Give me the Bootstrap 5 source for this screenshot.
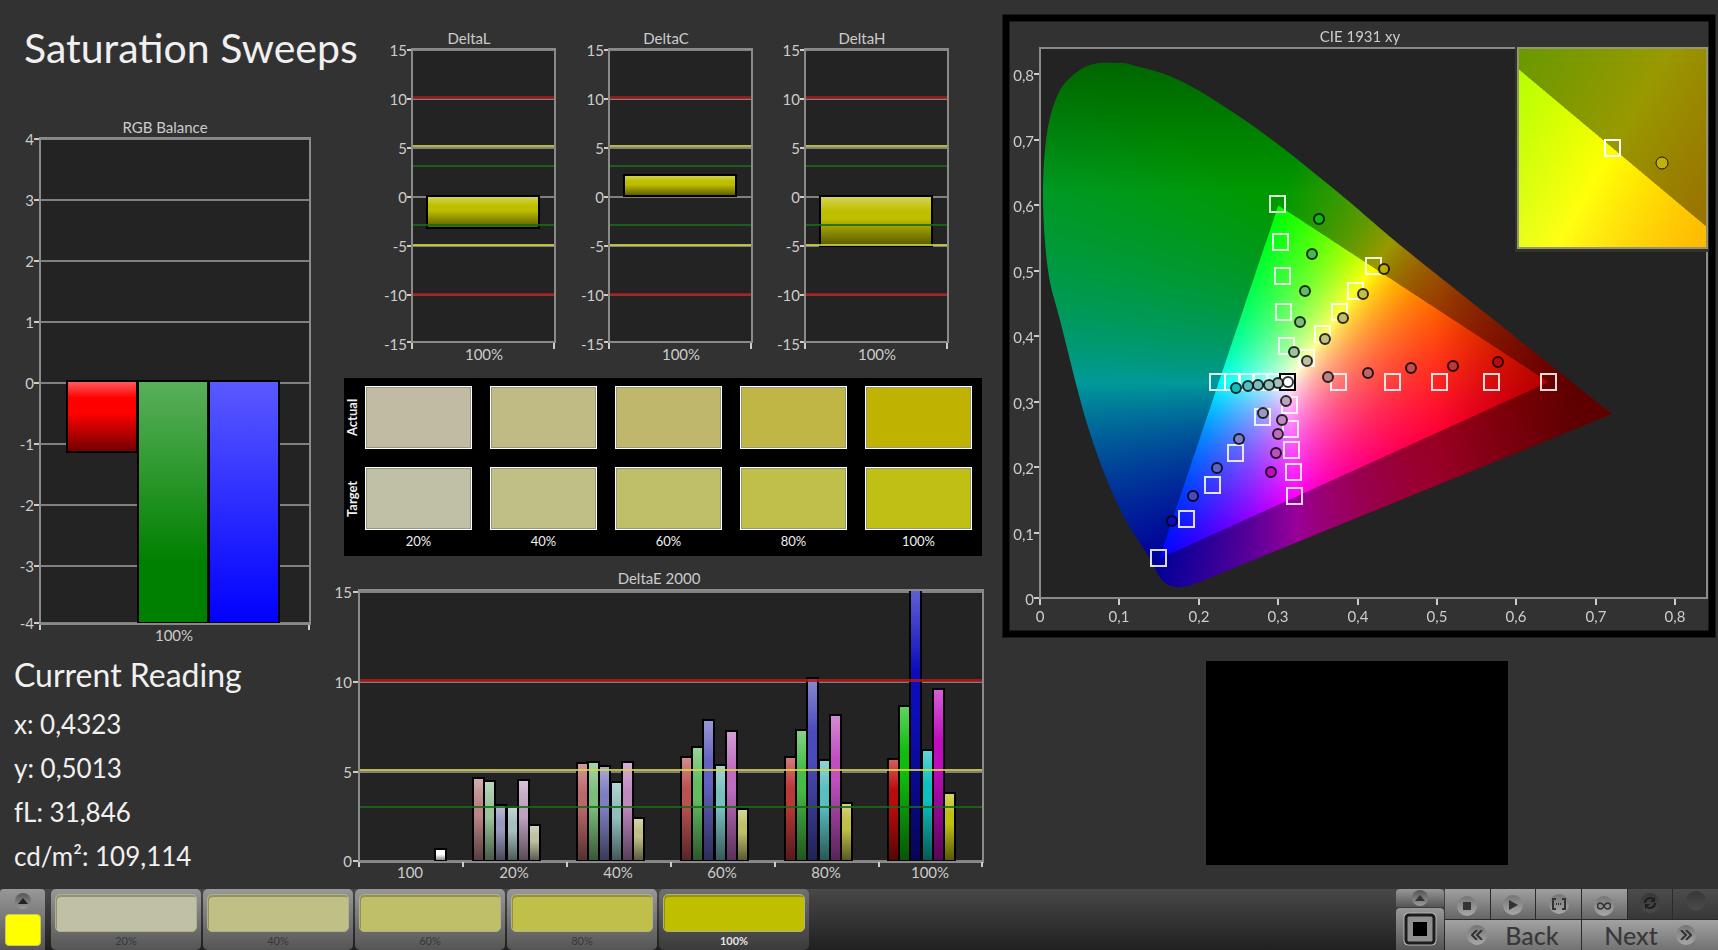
<!DOCTYPE html>
<html lang="en">
<head>
<meta charset="utf-8">
<meta name="viewport" content="width=device-width, initial-scale=1">
<title>Saturation Sweeps</title>
<link rel="stylesheet" href="https://cdn.jsdelivr.net/npm/bootstrap@5.3.0/dist/css/bootstrap.min.css">
<style>
  body { background: #323232; color: #f0f0f0; font-family: Lato, "Open Sans", sans-serif; }
  .dash { display: grid; grid-template-columns: minmax(0, 330fr) minmax(0, 670fr) minmax(0, 718fr); align-items: start; }
  .dash svg { display: block; width: 100%; height: auto; }
  .page-title { font-size: 41px; line-height: 48px; padding: 24px 0 38px 24px; white-space: nowrap; }
  .reading { padding-left: 14px; }
  .reading h2 { font-size: 32px; line-height: 42px; margin-bottom: 6px; }
  .reading p { font-size: 26px; line-height: 44px; margin: 0; }
  .axis { font-size: 15px; fill: #ccc; }
  .grid-line { stroke: #808080; stroke-width: 2; shape-rendering: crispEdges; }
  .tick { stroke: #ccc; stroke-width: 2; shape-rendering: crispEdges; }
  .frame { fill: none; stroke: #8a8a8a; stroke-width: 2; shape-rendering: crispEdges; }
  .limit { stroke-width: 3; shape-rendering: crispEdges; opacity: .85; }
  .limit.thin { stroke-width: 2; }

  .swatches { background: #000; margin: 8px 18px 9px 14px; padding: 8px 10px 0 0; display: grid;
    grid-template-columns: 21px 125fr 125fr 125fr 125fr 107fr; }
  .swatches .side { writing-mode: vertical-rl; transform: rotate(180deg); font-size: 13px; font-weight: 700; line-height: 16px;
    text-align: center; width: 16px; }
  .swatches .chip { height: 63px; border: 1px solid #fff; box-shadow: inset 0 0 0 1px #99977c; }
  .swatches .row-gap { grid-column: 1 / -1; height: 18px; }
  .swatches .cap { font-size: 13px; line-height: 18px; padding: 2px 0 6px; text-align: center; }
  .swatches .cell { padding-right: 18px; }
  .swatches .cell.last { padding-right: 0; }

  .preview { background: #000; width: 42%; aspect-ratio: 301 / 204; margin: 11px auto 0 206px; }

  .dock { height: 61px; background: linear-gradient(#484848, #202020); }
  .dock button { border: 0; padding: 0; color: #383838; }
  .metal { background: linear-gradient(#989898, #555); }
  .picker { width: 45px; border-radius: 4px 4px 0 0; }
  .picker .tone { width: 36px; height: 32px; background: #ff0; border: 1px solid #c8c85a; border-radius: 4px; }
  .picks { gap: 2px; margin-left: 2px; }
  .pick { flex: 0 1 150px; border-radius: 5px; font-size: 11px; line-height: 18px; }
  .pick .tone { height: 38px; margin: 5px 4px 0 4px; border: 1px solid #b0b08a; border-radius: 5px; box-shadow: inset 1px 2px 0 rgba(90, 90, 40, .45); }
  .dock .pick.on { background: linear-gradient(#707070, #3a3a3a); color: #e4e4e4; font-weight: 700; }
  .transport { width: 322px; }
  .stopcol { width: 48px; gap: 1px; margin-right: 1px; }
  .stopcol button { border-radius: 4px 4px 0 0; }
  .stopcol .expand { height: 18px; }
  .keys { display: grid; grid-template-columns: repeat(6, 1fr); grid-template-rows: 30px 30px; gap: 1px; background: #2a2a2a; }
  .keys button { background: linear-gradient(#a0a0a0, #666); }
  .keys .dim { background: linear-gradient(#4c4c4c, #383838); }
  .keys .wide { grid-column: span 3; font-size: 25px; line-height: 30px; font-weight: 500; background: linear-gradient(#a2a2a2, #727272); }
  .wide .legend-row { gap: 18px; }
  .knob { width: 20px; height: 20px; border-radius: 50%; background: linear-gradient(#757575, #a8a8a8); display: inline-flex; align-items: center; justify-content: center; }
  .dim .knob { background: linear-gradient(#383838, #4a4a4a); }
  .knob.mini { width: 16px; height: 16px; background: linear-gradient(#555, #999); }
</style>
</head>
<body class="d-flex flex-column min-vh-100">

<main class="dash flex-grow-1">
  <section>
    <h1 class="page-title fw-normal m-0">Saturation Sweeps</h1>
    <svg id="rgb" viewBox="0 110 330 540" role="img" aria-label="RGB Balance"></svg>
    <div class="reading">
      <h2 class="fw-normal pt-1">Current Reading</h2>
      <p>x: 0,4323</p>
      <p>y: 0,5013</p>
      <p>fL: 31,846</p>
      <p>cd/m²: 109,114</p>
    </div>
  </section>

  <section>
    <svg id="delta" viewBox="330 0 670 370" role="img" aria-label="DeltaL, DeltaC and DeltaH"></svg>
    <div class="swatches" id="swatches"></div>
    <svg id="de" viewBox="330 565 670 320" role="img" aria-label="DeltaE 2000"></svg>
  </section>

  <section>
    <svg id="cie" viewBox="1000 0 718 650" role="img" aria-label="CIE 1931 xy">
      <rect x="1006" y="18" width="706" height="616" fill="none" stroke="#000" stroke-width="7"/>
      <rect x="1040" y="48" width="667" height="550" fill="#232323"/>
      <foreignObject x="1040" y="48" width="667" height="550"><canvas id="gamut" class="d-block" width="667" height="550"></canvas></foreignObject>
      <g id="cieAxes"></g>
      <g id="points"></g>
      <rect x="1515" y="46" width="194" height="206" fill="#323232"/>
      <foreignObject x="1518" y="48" width="189" height="200"><canvas id="detail" class="d-block" width="189" height="200"></canvas></foreignObject>
      <rect class="frame" x="1518" y="48" width="189" height="200" style="stroke:#96966e"/>
      <rect x="1605" y="140" width="15" height="16" fill="none" stroke="#fff" stroke-width="2"/>
      <circle cx="1662" cy="163" r="6" fill="#bfb200" stroke="#111" stroke-width="1"/>
    </svg>
    <div class="preview"></div>
  </section>
</main>

<footer class="dock d-flex align-items-stretch justify-content-between">
  <div class="d-flex flex-grow-1">
    <button class="picker metal d-flex flex-column align-items-center justify-content-between pt-1 pb-1 me-1" aria-label="Current colour">
      <span class="knob mini"><svg width="10" height="6"><path d="M5 0 10 6H0z" fill="#222"/></svg></span>
      <span class="tone"></span>
    </button>
    <div class="picks d-flex flex-grow-1" id="picks"></div>
  </div>
  <div class="transport d-flex">
    <div class="stopcol d-flex flex-column">
      <button class="expand metal d-flex align-items-center justify-content-center" aria-label="Expand"><span class="knob mini"><svg width="10" height="6"><path d="M5 0 10 6H0z" fill="#333"/></svg></span></button>
      <button class="metal flex-grow-1 d-flex align-items-center justify-content-center" aria-label="Stop">
        <svg width="34" height="34" viewBox="0 0 34 34"><rect x="1" y="1" width="32" height="32" rx="4" fill="#999" stroke="#b5b5b5"/><rect x="3" y="3" width="28" height="28" rx="3" fill="#909090" stroke="#1c1c1c" stroke-width="3"/><path d="M10 10h14v14H10z" fill="#000"/></svg>
      </button>
    </div>
    <div class="keys flex-grow-1">
      <button aria-label="Stop reading"><span class="knob"><svg width="8" height="8"><path d="M0 0h8v8H0z" fill="#333"/></svg></span></button>
      <button aria-label="Play"><span class="knob"><svg width="10" height="10"><path d="M1 0 10 5 1 10z" fill="#333"/></svg></span></button>
      <button aria-label="Range"><span class="knob"><svg width="14" height="12" fill="none" stroke="#333" stroke-width="2"><path d="M4 1H1v10h3M10 1h3v10h-3"/><path d="M4 6h6" stroke-dasharray="1 1"/></svg></span></button>
      <button aria-label="Loop"><span class="knob"><svg width="14" height="8" fill="none" stroke="#333" stroke-width="1.500"><path d="M7 4C5 1 4 1 3.500 1a3 3 0 0 0 0 6C5 7 6 6 7 4s2-3 3.500-3a3 3 0 0 1 0 6C9 7 8 6 7 4z"/></svg></span></button>
      <button class="dim" aria-label="Refresh"><span class="knob"><svg width="14" height="14" fill="none" stroke="#1e1e1e" stroke-width="2"><path d="M2 7a5 5 0 0 1 8-4M12 7a5 5 0 0 1-8 4"/><path d="M12 1v5H7zM2 13V8h5z" fill="#1e1e1e" stroke="none"/></svg></span></button>
      <button class="dim" aria-label="Record"><span class="knob"></span></button>
      <button class="wide"><span class="legend-row d-flex align-items-center justify-content-center"><span class="knob"><svg width="12" height="10" fill="none" stroke="#333" stroke-width="2"><path d="M6 0 1 5l5 5M11 0 6 5l5 5"/></svg></span>Back</span></button>
      <button class="wide"><span class="legend-row d-flex align-items-center justify-content-center">Next<span class="knob"><svg width="12" height="10" fill="none" stroke="#333" stroke-width="2"><path d="m1 0 5 5-5 5M6 0l5 5-5 5"/></svg></span></span></button>
    </div>
  </div>
</footer>

<script src="https://cdn.jsdelivr.net/npm/bootstrap@5.3.0/dist/js/bootstrap.bundle.min.js"></script>
<script>
const $ = id => document.getElementById(id);
const line = (cls, x1, y1, x2, y2, extra = '') => `<line class="${cls}" x1="${x1}" y1="${y1}" x2="${x2}" y2="${y2}" ${extra}/>`;
const label = (x, y, t, a = 'middle') => `<text class="axis" x="${x}" y="${y}" text-anchor="${a}">${t}</text>`;
const rect = (x, y, w, h, fill, extra = '') => `<rect x="${x}" y="${y}" width="${w}" height="${h}" fill="${fill}" ${extra}/>`;
const shade = `<defs><linearGradient id="shade" x2="0" y2="1"><stop offset="0" stop-color="#fff" stop-opacity=".35"/><stop offset=".3" stop-color="#fff" stop-opacity="0"/><stop offset=".45" stop-opacity="0"/><stop offset="1" stop-opacity=".55"/></linearGradient></defs>`;
const bar = (x, y, w, h, c) => rect(x, y, w, h, c) + rect(x, y, w, h, 'url(#shade)', 'stroke="#000" stroke-width="2"');

// RGB balance
(() => {
  let s = `<defs>
    <linearGradient id="gr" x2="0" y2="1"><stop offset="0" stop-color="#ff6060"/><stop offset=".24" stop-color="#f00"/><stop offset=".45" stop-color="#f00"/><stop offset="1" stop-color="#700000"/></linearGradient>
    <linearGradient id="gg" x2="0" y2="1"><stop offset="0" stop-color="#5ab05a"/><stop offset=".75" stop-color="#008000"/></linearGradient>
    <linearGradient id="gb" x2="0" y2="1"><stop offset="0" stop-color="#5a5aff"/><stop offset="1" stop-color="#00f"/></linearGradient></defs>`;
  s += rect(40, 138, 270, 486, '#232323');
  for (let v = 4; v >= -4; v--) {
    const y = v === -4 ? 623 : Math.round(383 - v * 61);
    s += line('grid-line', 40, y, 310, y) + line('tick', 34, y, 39, y) + label(34, y + 6, v, 'end');
  }
  s += rect(67, 381, 70, 71, 'url(#gr)', 'stroke="#000" stroke-width="2"');
  s += rect(138, 381, 70, 242, 'url(#gg)', 'stroke="#000" stroke-width="2"');
  s += rect(209, 381, 70, 242, 'url(#gb)', 'stroke="#000" stroke-width="2"');
  s += '<rect class="frame" x="40" y="138" width="270" height="486"/>';
  s += line('tick', 40, 625, 40, 630) + line('tick', 309, 625, 309, 630);
  $('rgb').innerHTML = s + label(165, 133, 'RGB Balance') + label(174, 641, '100%');
})();

// DeltaL / DeltaC / DeltaH
(() => {
  let s = shade;
  [['DeltaL', 412, 196, 32], ['DeltaC', 609, 175, 21], ['DeltaH', 805, 196, 50]].forEach(([name, x, top, h]) => {
    s += rect(x, 49, 143, 293, '#232323');
    for (let v = 15; v >= -15; v -= 5) {
      const y = v === -15 ? 342 : Math.round(197 - v * 9.8);
      s += line('grid-line', x, y, x + 143, y) + line('tick', x - 5, y, x, y) + label(x - 5, y + (v === -15 ? 8 : 6), v, 'end');
    }
    s += bar(x + 15, top, 112, h, '#bfbf00');
    [[97, '#a01c1c'], [146, '#d2d23c'], [166, '#186a18'], [225, '#186a18'], [245, '#d2d23c'], [294, '#a01c1c']].forEach(([y, c]) => {
      s += line(c === '#a01c1c' ? 'limit' : 'limit thin', x, y, x + 143, y, `stroke="${c}"`);
    });
    s += `<rect class="frame" x="${x}" y="49" width="143" height="293"/>`;
    s += line('tick', x, 343, x, 349) + line('tick', x + 142, 343, x + 142, 349);
    s += label(x + 57, 44, name) + label(x + 72, 360, '100%');
  });
  $('delta').innerHTML = s;
})();

// Actual / target chips
(() => {
  const caps = ['20%', '40%', '60%', '80%', '100%'];
  const sets = { Actual: ['#c0bba2', '#c0ba84', '#bfb76b', '#bfb645', '#bfb200'], Target: ['#bfc0a6', '#bfbf86', '#bfbf6a', '#bfbf4a', '#bfbf14'] };
  const last = i => i === 4 ? ' last' : '';
  let s = '';
  Object.entries(sets).forEach(([name, cs], n) => {
    if (n) s += '<div class="row-gap"></div>';
    s += `<div class="side">${name}</div>` + cs.map((c, i) => `<div class="cell${last(i)}"><div class="chip" style="background:${c}"></div></div>`).join('');
  });
  s += '<div></div>' + caps.map((c, i) => `<div class="cell${last(i)}"><div class="cap">${c}</div></div>`).join('');
  $('swatches').innerHTML = s;
  $('picks').innerHTML = caps.map((c, i) => `<button class="pick metal d-flex flex-column align-items-stretch${i === 4 ? ' on' : ''}"><span class="tone" style="background:${i === 4 ? '#bfbf00' : sets.Target[i]}"></span><span>${c}</span></button>`).join('');
})();

// DeltaE 2000
(() => {
  let s = shade.replace('id="shade"', 'id="shade2"') + rect(359, 590, 624, 271, '#232323');
  [[15, 592], [10, 682], [5, 772], [0, 861]].forEach(([v, y]) => {
    s += line('grid-line', 359, y, 983, y) + line('tick', 353, y, 359, y) + label(352, y + 6, v, 'end');
  });
  const groups = [
    [473, [778, 781, 805, 807, 780, 825], ['#bb8585', '#9cc29c', '#9a9ac0', '#a5bebe', '#bfa2bf', '#bfbfa4']],
    [577, [763, 762, 766, 782, 762, 818], ['#bb6868', '#7cbd7c', '#7d7dc0', '#92bebe', '#bf88bf', '#bfbf86']],
    [681, [757, 747, 720, 765, 731, 809], ['#bb5252', '#62bd62', '#6262bf', '#78bfbf', '#bf6cbf', '#bfbf6a']],
    [785, [757, 730, 678, 760, 715, 803], ['#bb3838', '#46bb46', '#4a4abb', '#57bfbf', '#bf4fbf', '#bfbf4a']],
    [888, [759, 706, 590, 750, 689, 793], ['#bb0c0c', '#0ebb0e', '#0c0cbb', '#0fbfbf', '#bf0cbf', '#bfbf10']]
  ];
  const b2 = (x, y, c) => bar(x, y, 11, 861 - y, c).replace('#shade', '#shade2');
  s += b2(435, 849, '#fff');
  groups.forEach(([x, tops, cs]) => tops.forEach((y, i) => { s += b2(Math.round(x + i * 11.2), y, cs[i]); }));
  s += line('limit', 359, 680, 983, 680, 'stroke="#b01818"') + line('limit thin', 359, 770, 983, 770, 'stroke="#d8d840"') + line('limit thin', 359, 807, 983, 807, 'stroke="#186a18"');
  s += '<rect class="frame" x="359" y="590" width="624" height="272"/>';
  ['100', '20%', '40%', '60%', '80%', '100%'].forEach((t, i) => { s += line('tick', 359 + i * 104, 862, 359 + i * 104, 867) + label(410 + i * 104, 878, t); });
  $('de').innerHTML = s + line('tick', 982, 862, 982, 867) + label(659, 584, 'DeltaE 2000');
})();

// CIE diagram
(() => {
  const red = [.64, .33], green = [.3, .6], blue = [.15, .06];
  const side = (p, a, b) => (p[0] - b[0]) * (a[1] - b[1]) - (a[0] - b[0]) * (p[1] - b[1]);
  const inside = p => {
    const d = [side(p, red, green), side(p, green, blue), side(p, blue, red)];
    return d.every(v => v <= 0) || d.every(v => v >= 0);
  };
  const clamp = v => Math.min(1, Math.max(0, v));
  function color(x, y) {
    const z = 1 - x - y;
    const c = [3.2406 * x - 1.5372 * y - .4986 * z, -.9689 * x + 1.8758 * y + .0415 * z, .0557 * x - .204 * y + 1.057 * z].map(v => Math.max(0, v));
    const m = Math.max(...c);
    let k = inside([x, y]) ? 255 : 153;
    k *= 1 - .38 * clamp((x - .5) / .17);
    k *= 1 - .34 * clamp((y - .62) / .2);
    return c.map(v => v / m * k);
  }
  // each pixel averages four samples, so the edges of the triangle stay smooth
  function paint(cv, x0, y0, sx, sy) {
    const g = cv.getContext('2d'), im = g.createImageData(cv.width, cv.height);
    for (let j = 0, n = 0; j < cv.height; j++) for (let i = 0; i < cv.width; i++, n += 4) {
      const sum = [0, 0, 0];
      for (const [u, v] of [[.25, .25], [.75, .25], [.25, .75], [.75, .75]]) color(x0 + (i + u) / sx, y0 - (j + v) / sy).forEach((c, q) => { sum[q] += c / 4; });
      im.data[n] = sum[0]; im.data[n + 1] = sum[1]; im.data[n + 2] = sum[2]; im.data[n + 3] = 255;
    }
    g.putImageData(im, 0, 0);
    return g;
  }
  const g = paint($('gamut'), 0, .8405, 794.5, 654.4);
  paint($('detail'), .3943, .5303, 3790, 4000);

  // spectral locus as a smooth curve, closed by the purple line
  const L = [[152, 537], [136, 539], [122, 532], [109, 509], [79, 459], [49, 382], [20, 272], [8, 222], [3, 150], [7, 85], [19, 44], [37, 24], [54, 16], [74, 15], [92, 17], [143, 34], [216, 80], [294, 141], [365, 201], [468, 283], [572, 366]];
  g.globalCompositeOperation = 'destination-in';
  g.beginPath(); g.moveTo(...L[0]);
  for (let i = 0; i < L.length - 1; i++) {
    const a = L[Math.max(0, i - 1)], b = L[i], c = L[i + 1], d = L[Math.min(L.length - 1, i + 2)];
    g.bezierCurveTo(b[0] + (c[0] - a[0]) / 6, b[1] + (c[1] - a[1]) / 6, c[0] - (d[0] - b[0]) / 6, c[1] - (d[1] - b[1]) / 6, c[0], c[1]);
  }
  g.closePath(); g.fill();

  let s = '<rect class="frame" x="1040" y="48" width="667" height="550"/>';
  for (let i = 0; i <= 8; i++) {
    const t = i ? '0,' + i : '0', x = Math.round(1040 + i * 79.4), y = Math.round(598 - i * 65.44);
    s += line('tick', x, 599, x, 605) + label(x, 622, t) + line('tick', 1034, y, 1039, y) + label(1034, y + 7, t, 'end');
  }
  $('cieAxes').innerHTML = s + label(1360, 42, 'CIE 1931 xy');

  const targets = [[1277,204],[1280,242],[1282,276],[1283,312],[1286,346],[1373,266],[1355,291],[1339,312],[1322,334],[1306,358],[1217,382],[1232,382],[1246,382],[1260,382],[1274,382],[1338,382],[1392,382],[1439,382],[1491,382],[1548,382],[1262,417],[1235,453],[1212,485],[1186,519],[1158,558],[1289,405],[1290,429],[1291,450],[1293,472],[1294,496]];
  const readings = [
    [[1293,352],'#9cc29c'],[[1299,322],'#7cbd7c'],[[1304,291],'#62bd62'],[[1311,254],'#46bb46'],[[1318,219],'#0ebb0e'],
    [[1306,361],'#bfbfa4'],[[1324,339],'#bfbf86'],[[1342,318],'#bfbf6a'],[[1362,294],'#bfbf4a'],[[1383,269],'#bfb200'],
    [[1327,377],'#bb8585'],[[1367,373],'#bb6868'],[[1410,368],'#bb5252'],[[1452,366],'#bb3838'],[[1497,362],'#bb0c0c'],
    [[1277,383],'#a5bebe'],[[1268,385],'#92bebe'],[[1257,385],'#78bfbf'],[[1247,386],'#57bfbf'],[[1235,388],'#0fbfbf'],
    [[1285,401],'#bfa2bf'],[[1281,420],'#bf88bf'],[[1277,434],'#bf6cbf'],[[1275,453],'#bf4fbf'],[[1270,472],'#bf0cbf'],
    [[1262,413],'#9a9ac0'],[[1238,439],'#7d7dc0'],[[1216,468],'#6262bf'],[[1192,496],'#4a4abb'],[[1171,521],'#0c0cbb'],
    [[1287,382],'#fff']];
  s = targets.map(([x, y]) => rect(x - 7, y - 8, 15, 16, 'none', 'stroke="#fff" stroke-opacity=".85" stroke-width="2"')).join('');
  s += rect(1280, 374, 15, 16, '#fff', 'stroke="#000" stroke-width="2"');
  s += readings.map(([[x, y], c]) => `<circle cx="${x + 1}" cy="${y}" r="5" fill="${c}" stroke="#000" stroke-opacity=".8" stroke-width="2"/>`).join('');
  $('points').innerHTML = s;
})();
</script>
</body>
</html>
